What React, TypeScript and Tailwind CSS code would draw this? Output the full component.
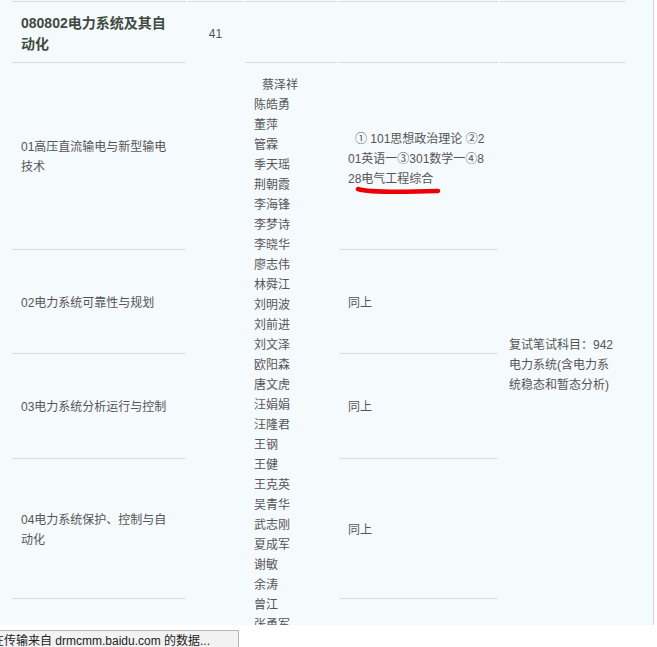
const cjk = "font-['Liberation_Sans','Noto_Sans_CJK_SC',sans-serif]";

const names = [
  "陈皓勇",
  "董萍",
  "管霖",
  "季天瑶",
  "荆朝霞",
  "李海锋",
  "李梦诗",
  "李晓华",
  "廖志伟",
  "林舜江",
  "刘明波",
  "刘前进",
  "刘文泽",
  "欧阳森",
  "唐文虎",
  "汪娟娟",
  "汪隆君",
  "王钢",
  "王健",
  "王克英",
  "吴青华",
  "武志刚",
  "夏成军",
  "谢敏",
  "余涛",
  "曾江",
  "张勇军",
  "张尧",
];

const cell = "border-t border-[#d8dde1]";

export default function App() {
  return (
    <div className={`h-[647px] w-[657px] overflow-hidden bg-white ${cjk}`}>
      {/* 表格区域 */}
      <div className="h-[625px] w-[654px] overflow-hidden border-r border-[#cfd3d6] bg-[#f5fafd] pl-[12px] pt-px text-[12px] text-[#555]">
        <div className="grid grid-cols-[174px_55px_92px_159px_126px] grid-rows-[61px_187px_104px_105px_140px_200px] gap-x-[2px]">
          {/* 第一行 */}
          <div className={`${cell} flex items-center px-[9px] pt-[3px] text-[14px] font-bold leading-[21px] text-[#3f4a42]`}>
            080802电力系统及其自动化
          </div>
          <div className={`${cell} flex items-center justify-center pt-[3px]`}>41</div>
          <div className={cell}></div>
          <div className={cell}></div>
          <div className={cell}></div>

          {/* 01 */}
          <div className={`${cell} col-start-1 row-start-2 flex items-center px-[9px] pt-[2px] leading-[20px]`}>
            01高压直流输电与新型输电技术
          </div>
          <div className="col-start-2 row-start-2"></div>

          {/* 导师名单 */}
          <div className={`${cell} col-start-3 row-span-5 row-start-2 pl-[9px] pt-[12px] leading-[20px]`}>
            <div className="pl-[8px]">蔡泽祥</div>
            {names.map((n) => (
              <div key={n}>{n}</div>
            ))}
          </div>

          {/* 考试科目 */}
          <div className={`${cell} relative col-start-4 row-start-2 flex items-center px-[9px] leading-[20px]`}>
            <div className="pt-[6px]">
              <span className="pl-[7px]">① 101思想政治理论 ②2</span>
              <br />
              01英语一③301数学一④8
              <br />
              28电气工程综合
            </div>
            <svg
              className="absolute left-[16px] top-[122px]"
              width="86"
              height="10"
              viewBox="0 0 86 10"
            >
              <path
                d="M3 4 C 12 7, 40 7.5, 83 6"
                stroke="#ee0000"
                strokeWidth="4.5"
                strokeLinecap="round"
                fill="none"
              />
            </svg>
          </div>

          {/* 复试 */}
          <div className={`${cell} col-start-5 row-span-5 row-start-2 px-[9px] pt-[272px] leading-[20px]`}>
            复试笔试科目：942
            <br />
            电力系统(含电力系
            <br />
            统稳态和暂态分析)
          </div>

          {/* 02 */}
          <div className={`${cell} col-start-1 row-start-3 flex items-center px-[9px] pt-[2px]`}>
            02电力系统可靠性与规划
          </div>
          <div className={`${cell} col-start-4 row-start-3 flex items-center px-[9px] pt-[2px]`}>同上</div>

          {/* 03 */}
          <div className={`${cell} col-start-1 row-start-4 flex items-center px-[9px] pt-[2px]`}>
            03电力系统分析运行与控制
          </div>
          <div className={`${cell} col-start-4 row-start-4 flex items-center px-[9px] pt-[2px]`}>同上</div>

          {/* 04 */}
          <div className={`${cell} col-start-1 row-start-5 flex items-center px-[9px] pt-[2px] leading-[20px]`}>
            04电力系统保护、控制与自动化
          </div>
          <div className={`${cell} col-start-4 row-start-5 flex items-center px-[9px] pt-[2px]`}>同上</div>

          {/* 下一行 */}
          <div className={`${cell} col-start-1 row-start-6`}></div>
          <div className={`${cell} col-start-4 row-start-6`}></div>
        </div>
      </div>

      {/* 状态栏 */}
      <div className="mt-[5px] flex h-[20px] w-[239px] items-center overflow-hidden border-r border-t border-[#b4b4b4] bg-[#f2f2f2]">
        <span className="ml-[-20px] whitespace-nowrap text-[12px] text-[#222]">
          正在传输来自 drmcmm.baidu.com 的数据...
        </span>
      </div>
    </div>
  );
}
